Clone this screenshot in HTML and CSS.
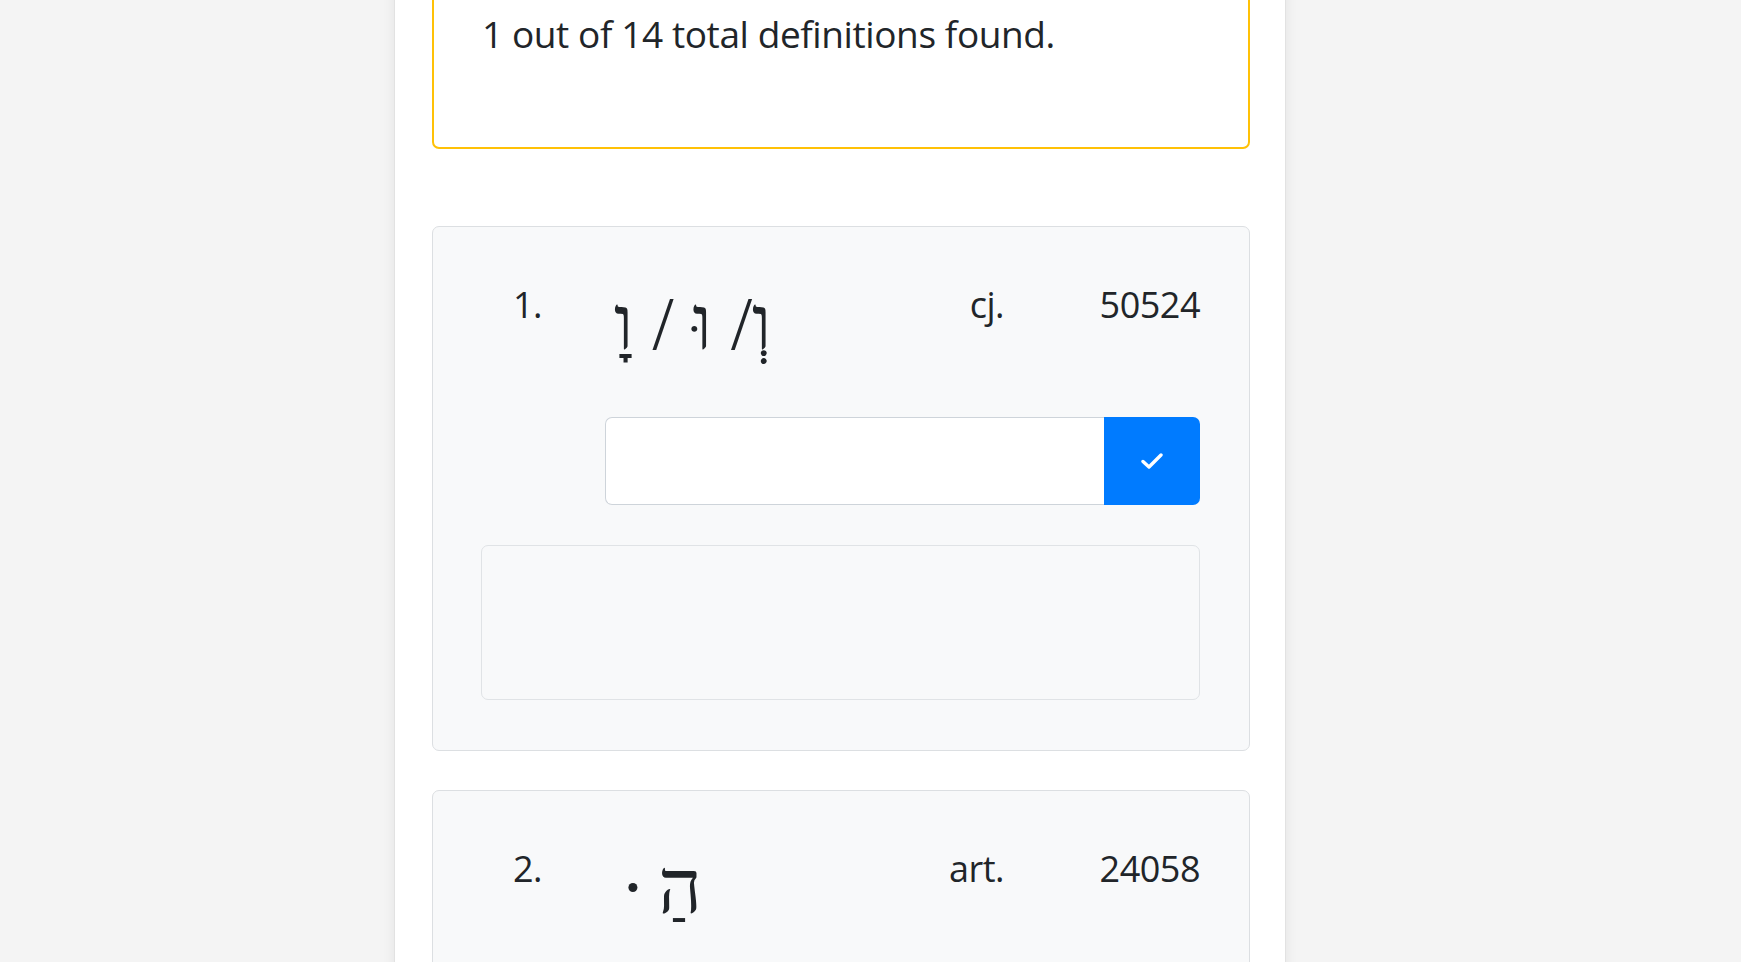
FILE: index.html
```html
<!DOCTYPE html>
<html lang="en">
<head>
<meta charset="utf-8">
<title>Definitions</title>
<link rel="stylesheet" href="styles.css">
</head>
<body>
<main class="column">
  <section class="notice">
    <p class="notice-text">1 out of 14 total definitions found.</p>
  </section>

  <article class="card">
    <div class="entry">
      <span class="entry-num">1.</span>
      <span class="entry-heb" dir="rtl" lang="he">וְ/ וּ / וָ</span>
      <span class="entry-pos">cj.</span>
      <span class="entry-code">50524</span>
    </div>
    <div class="answer">
      <input class="answer-input" type="text" aria-label="Answer">
      <button class="answer-btn" type="button" aria-label="Check">
        <svg width="22" height="16" viewBox="0 0 22 16"><path d="M2 8.5 L8 14 L20 2" fill="none" stroke="#fff" stroke-width="3.4" stroke-linecap="round" stroke-linejoin="round"/></svg>
      </button>
    </div>
    <div class="result"></div>
  </article>

  <article class="card">
    <div class="entry">
      <span class="entry-num">2.</span>
      <span class="entry-heb" dir="rtl" lang="he">הַ&#x2006;·&#x200A;</span>
      <span class="entry-pos">art.</span>
      <span class="entry-code">24058</span>
    </div>
    <div class="answer">
      <input class="answer-input" type="text" aria-label="Answer">
      <button class="answer-btn" type="button" aria-label="Check">
        <svg width="22" height="16" viewBox="0 0 22 16"><path d="M2 8.5 L8 14 L20 2" fill="none" stroke="#fff" stroke-width="3.4" stroke-linecap="round" stroke-linejoin="round"/></svg>
      </button>
    </div>
    <div class="result"></div>
  </article>
</main>
</body>
</html>
```

FILE: styles.css
```css
html, body {
  margin: 0;
  padding: 0;
}
body {
  background: #f4f4f4;
  font-family: "Open Sans", "Noto Sans", "Liberation Sans", sans-serif;
  color: #212529;
  overflow: hidden;
  height: 962px;
}
.column {
  margin-left: 394px;
  width: 892px;
  box-sizing: border-box;
  min-height: 1400px;
  background: #fff;
  border-left: 1px solid #e2e2e2;
  border-right: 1px solid #e2e2e2;
  box-shadow: 0 0 12px rgba(0, 0, 0, 0.07);
  padding: 0 35px 0 37px;
  margin-top: -51px;
}
.notice {
  border: 2px solid #ffc107;
  border-radius: 7px;
  padding: 59px 48px 89px 48px;
  margin-bottom: 77px;
}
.notice-text {
  margin: 0;
  font-size: 37px;
  line-height: 48px;
  font-weight: 400;
  letter-spacing: -0.4px;
}
.card {
  background: #f8f9fa;
  border: 1px solid #dcdfe2;
  border-radius: 7px;
  padding: 48px 49px 50px 48px;
  margin-bottom: 39px;
}
.entry {
  display: grid;
  grid-template-columns: 101px 1fr auto 196px;
  padding-left: 32px;
  font-size: 36px;
  line-height: 44px;
  padding-top: 8px;
  height: 127px;
  box-sizing: border-box;
}
.entry-num, .entry-pos, .entry-code {
  letter-spacing: -0.5px;
}
.entry-heb {
  font-family: "Liberation Serif", "DejaVu Serif", serif;
  font-size: 76px;
  line-height: 76px;
  text-align: left;
  margin-top: 2px;
}
.entry-pos {
  text-align: right;
}
.entry-code {
  text-align: right;
}
.answer {
  display: flex;
  margin-left: 124px;
  height: 88px;
  margin-top: 15px;
}
.answer-input {
  flex: 1;
  min-width: 0;
  box-sizing: border-box;
  height: 88px;
  margin: 0;
  border: 1px solid #ced4da;
  border-right: none;
  border-radius: 7px 0 0 7px;
  background: #fff;
}
.answer-btn {
  width: 96px;
  height: 88px;
  margin: 0;
  border: none;
  border-radius: 0 7px 7px 0;
  background: #007bff;
  display: flex;
  align-items: center;
  justify-content: center;
  padding: 0;
}
.result {
  margin-top: 40px;
  height: 155px;
  box-sizing: border-box;
  border: 1px solid #e0e3e6;
  border-radius: 7px;
  background: #f8f9fa;
}
```
